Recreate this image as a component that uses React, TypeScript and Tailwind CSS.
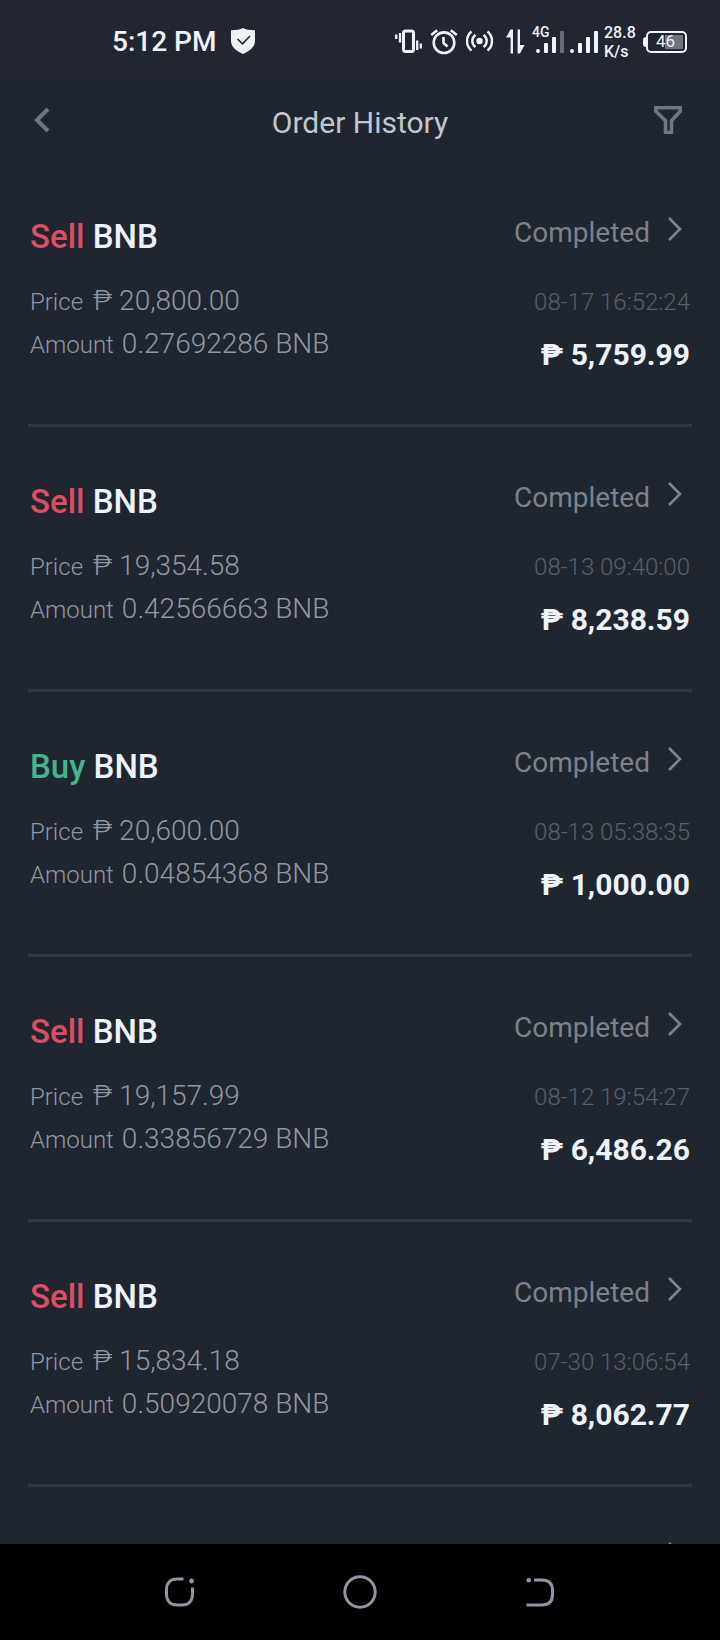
import clsx from "clsx";

interface Order {
  id: string;
  side: "Sell" | "Buy";
  asset: string;
  price: string;
  amount: string;
  total: string;
  time: string;
  status: string;
}

const orders: Order[] = [
  { id: "1", side: "Sell", asset: "BNB", price: "20,800.00", amount: "0.27692286", total: "5,759.99", time: "08-17 16:52:24", status: "Completed" },
  { id: "2", side: "Sell", asset: "BNB", price: "19,354.58", amount: "0.42566663", total: "8,238.59", time: "08-13 09:40:00", status: "Completed" },
  { id: "3", side: "Buy", asset: "BNB", price: "20,600.00", amount: "0.04854368", total: "1,000.00", time: "08-13 05:38:35", status: "Completed" },
  { id: "4", side: "Sell", asset: "BNB", price: "19,157.99", amount: "0.33856729", total: "6,486.26", time: "08-12 19:54:27", status: "Completed" },
  { id: "5", side: "Sell", asset: "BNB", price: "15,834.18", amount: "0.50920078", total: "8,062.77", time: "07-30 13:06:54", status: "Completed" },
];

function SignalBars({ weak }: { weak?: boolean }) {
  return (
    <svg width="28" height="24" viewBox="0 0 28 24" fill="currentColor">
      <circle cx="2" cy="21" r="2" />
      <rect x="8" y="13" width="4" height="10" rx="1" />
      <rect x="16" y="7" width="4" height="16" rx="1" />
      <rect x="24" y="1" width="4" height="22" rx="1" opacity={weak ? 0.35 : 1} />
    </svg>
  );
}

function StatusBar() {
  return (
    <div className="flex h-20 shrink-0 items-center justify-between bg-[#222631] pt-1 pl-28 pr-[33px] text-[#eef2fa]">
      <div className="flex items-center gap-3.5">
        <span className="text-[28px] leading-9 font-medium">5:12 PM</span>
        <svg width="26" height="28" viewBox="0 0 26 28">
          <path d="M13 0c3 1.600 8 2.400 12 2.200v10.300c0 6.500-5 10.500-12 13.500C6 23 1 19 1 12.500V2.200C5 2.400 10 1.600 13 0z" fill="#eef2f5" />
          <path d="M7.500 11l5 4.800 7.500-7.800" fill="none" stroke="#222631" strokeWidth="1.600" />
        </svg>
      </div>

      <div className="flex items-center">
        {/* vibrate */}
        <svg width="27" height="26" viewBox="0 0 27 26" fill="none" stroke="currentColor" strokeWidth="2.300">
          <rect x="8.500" y="2" width="10" height="20.500" rx="2" strokeWidth="3" />
          <path d="M1.200 5.500v4.500M5 4v9.500M22.200 11.500v9.500M25.800 14.500v5" />
        </svg>
        {/* alarm */}
        <svg className="ml-2" width="28" height="26" viewBox="0 0 28 26" fill="none" stroke="currentColor" strokeWidth="2.600">
          <circle cx="14" cy="13.700" r="10.300" />
          <path d="M13.500 8v6l4 3.500M1.200 6l6-4.700M26.800 6l-6-4.700" />
        </svg>
        {/* hotspot */}
        <svg className="ml-2" width="27" height="26" viewBox="0 0 27 26" fill="none" stroke="currentColor" strokeWidth="2.400">
          <circle cx="13.500" cy="12" r="3.200" fill="currentColor" stroke="none" />
          <path d="M9.500 18a7.200 7.200 0 0 1 0-12M17.500 18a7.200 7.200 0 0 0 0-12M5.500 21.500a12.300 12.300 0 0 1 0-19M21.500 21.500a12.300 12.300 0 0 0 0-19" />
        </svg>
        {/* data up and down */}
        <svg className="ml-[13px]" width="19" height="26" viewBox="0 0 19 26" fill="currentColor">
          <path d="M4.600 0.500H7v24H4.600V8.500H0zM11.600 0.500H14V16h4.600L14 24.500h-2.400z" />
        </svg>
        <div className="relative ml-[11px]">
          <SignalBars weak />
          <span className="absolute -top-1.5 -left-1 text-[14px] leading-4 font-medium">4G</span>
        </div>
        <div className="ml-1.5">
          <SignalBars />
        </div>
        <div className="ml-1.5 flex w-8 flex-col text-[16px] leading-[19px] font-medium">
          <span>28.8</span>
          <span>K/s</span>
        </div>
        <div className="ml-[7px] flex items-center">
          <div className="h-2.5 w-[3px] rounded-l-sm bg-current" />
          <div className="flex h-[22px] w-[41px] rounded-[5px] border-2 border-current p-0.5">
            <div className="flex w-full items-center bg-linear-to-r from-transparent from-45% to-[#6d727c] to-45% pl-1.5 text-[17px]">
              46
            </div>
          </div>
        </div>
      </div>
    </div>
  );
}

function Chevron() {
  return (
    <svg width="16" height="26" viewBox="0 0 16 26" fill="none" stroke="#7f848f" strokeWidth="2.600">
      <path d="M3 2l11 11L3 24" />
    </svg>
  );
}

function OrderRow({ order }: { order: Order }) {
  return (
    <li className="border-b-3 border-[#323640]">
      <a href={`#order-${order.id}`} className="flex justify-between px-0.5 pb-[51px] text-[#7c818c]">
        <div className="pt-[57px]">
          <h2 className="text-[33px] leading-9 font-medium text-[#eef2fa]">
            <span className={clsx(order.side === "Sell" ? "text-[#dd4e65]" : "text-[#3fb68b]")}>{order.side}</span>{" "}
            {order.asset}
          </h2>
          <dl className="mt-[25px] leading-[41px] font-light text-[#9297a2]">
            <div className="flex items-baseline gap-2.5">
              <dt className="text-[24px]">Price</dt>
              <dd className="text-[28px]">₱ {order.price}</dd>
            </div>
            <div className="flex items-baseline gap-2">
              <dt className="text-[24px]">Amount</dt>
              <dd className="text-[28px]">
                {order.amount} {order.asset}
              </dd>
            </div>
          </dl>
        </div>

        <div className="flex flex-col items-end pt-[52px]">
          <div className="flex items-start gap-4 pr-2 text-[28px] leading-9">
            <span className="pt-px">{order.status}</span>
            <span className="pt-0.5">
              <Chevron />
            </span>
          </div>
          <time className="mt-[30px] text-[24px] leading-[42px] font-light text-[#5a5f69]">{order.time}</time>
          <span className="mt-3.5 text-[30px] leading-9 font-bold text-[#eef2fa]">₱ {order.total}</span>
        </div>
      </a>
    </li>
  );
}

function NavBar() {
  return (
    <nav className="h-24 shrink-0 bg-black">
      <div className="mx-auto grid h-full w-3/4 grid-cols-3 place-items-center text-[#9096a3]">
        <button type="button" aria-label="Recent apps">
          <svg width="34" height="34" viewBox="0 0 34 34" fill="none" stroke="currentColor" strokeWidth="3">
            <path d="M20.500 4H14C7.500 4 3.500 8 3.500 14.500v5C3.500 26 7.500 30 14 30h5c6.500 0 10.500-4 10.500-10.500v-7" />
            <circle cx="28.500" cy="6" r="2.400" fill="currentColor" stroke="none" />
          </svg>
        </button>
        <button type="button" aria-label="Home">
          <svg width="36" height="36" viewBox="0 0 36 36" fill="none" stroke="currentColor" strokeWidth="3">
            <circle cx="18" cy="18" r="15.200" />
          </svg>
        </button>
        <button type="button" aria-label="Back">
          <svg width="34" height="34" viewBox="0 0 34 34" fill="none" stroke="currentColor" strokeWidth="3">
            <path d="M11 5h8c7 0 10.500 4 10.500 10.500v4C29.500 26 26 30 19 30H3.500" />
            <circle cx="5.700" cy="5.300" r="2.300" fill="currentColor" stroke="none" />
          </svg>
        </button>
      </div>
    </nav>
  );
}

export default function App() {
  return (
    <div className="flex h-screen flex-col bg-[#20262f] font-[Roboto,sans-serif]">
      <StatusBar />

      <header className="flex h-[82px] shrink-0 items-start justify-between px-8 pt-5">
        <button type="button" aria-label="Go back" className="flex h-10 w-9 items-center">
          <svg width="20" height="26" viewBox="0 0 20 26" fill="none" stroke="#717682" strokeWidth="4">
            <path d="M16 2L5 13l11 11" />
          </svg>
        </button>
        <h1 className="pt-[5px] text-[30px] leading-9 text-[#c1c6d0]">Order History</h1>
        <button type="button" aria-label="Filter orders" className="flex h-10 w-9 items-center">
          <svg width="30" height="30" viewBox="0 0 30 30" fill="none" stroke="#717682" strokeWidth="3.600">
            <path d="M3.800 2.800h24.400v3.500l-8.700 9.500v11.400h-6V15.800L3.800 6.300z" />
          </svg>
        </button>
      </header>

      <main className="min-h-0 flex-1 overflow-hidden px-7">
        <ul>
          {orders.map((order) => (
            <OrderRow key={order.id} order={order} />
          ))}
          {/* next page peeks in under the nav bar */}
          <li className="flex justify-end pt-[54px] pr-2.5">
            <Chevron />
          </li>
        </ul>
      </main>

      <NavBar />
    </div>
  );
}
